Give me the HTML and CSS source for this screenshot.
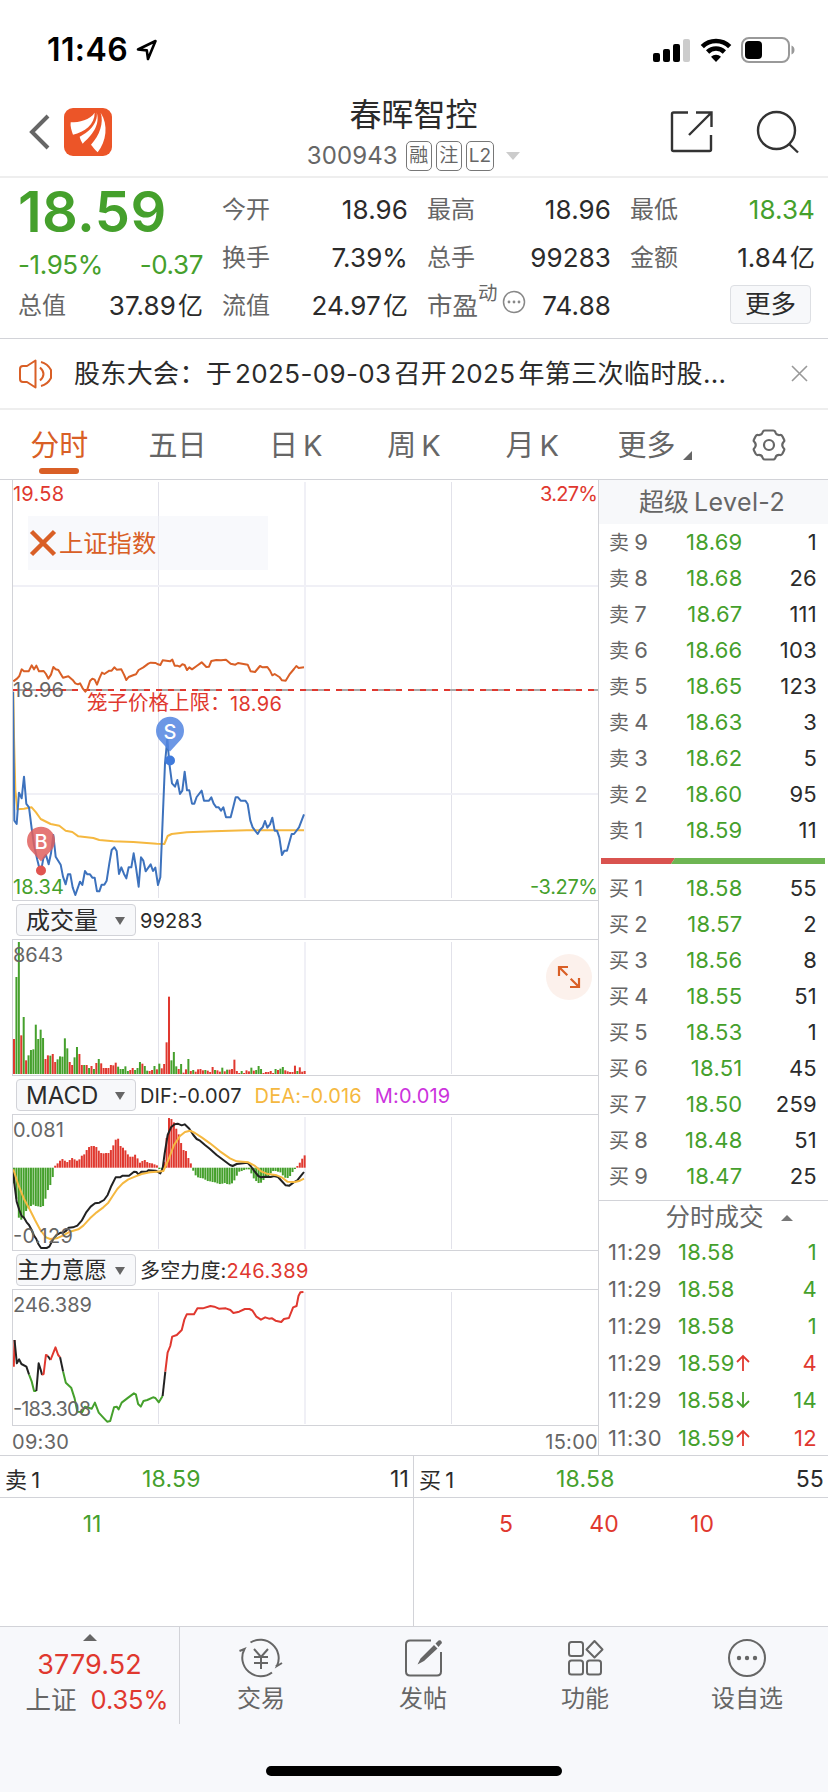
FILE: index.html
```html
<!DOCTYPE html>
<html lang="zh-CN">
    <head>
        <meta charset="UTF-8" />
        <meta name="viewport" content="width=device-width, initial-scale=1.0" />
        <link rel="stylesheet" href="styles.css">
        <title>春晖智控 300943</title>
    </head>
    <body>
        <div class="status-bar">
            <div class="clock">
                <span>11:46</span>
                <svg width="22" height="22" viewBox="0 0 22 22"><path d="M2 10.5 19.5 2 12 20 10.8 11.4Z" fill="none" stroke="#000" stroke-width="2.6" stroke-linejoin="round" /></svg>
            </div>
            <div class="status-icons">
                <svg width="38" height="24" viewBox="0 0 38 24">
                    <rect x="0" y="15" width="7" height="9" rx="2" /><rect x="10" y="11" width="7" height="13" rx="2" />
                    <rect x="20" y="6" width="7" height="18" rx="2" /><rect x="30" y="1" width="7" height="23" rx="2" fill="#ccc" />
                </svg>
                <svg width="32" height="24" viewBox="0 0 32 24">
                    <path d="M2.3 8.6a19.5 19.5 0 0 1 27.4 0M7.6 14a12 12 0 0 1 16.8 0" fill="none" stroke="#000" stroke-width="4.6" />
                    <path d="M16 24l-5-5.2a7 7 0 0 1 10 0z" />
                </svg>
                <svg width="54" height="26" viewBox="0 0 54 26">
                    <rect x="1" y="1" width="47" height="24" rx="7" fill="none" stroke="#999" stroke-width="2" />
                    <rect x="4" y="4" width="17" height="18" rx="4" />
                    <path d="M50.5 8.5c4 1.500 4 7.500 0 9z" fill="#999" />
                </svg>
            </div>
        </div>

        <header class="nav">
            <div class="nav-left">
                <svg width="24" height="40" viewBox="0 0 24 40"><path d="M21 4 5 20 21 36" fill="none" stroke="#666" stroke-width="4" /></svg>
                <svg class="logo" width="48" height="48" viewBox="0 0 144 144">
                    <rect width="144" height="144" rx="27" fill="#ec5528" />
                    <g fill="#fff">
                        <path d="M92 14C78 36 46 43 20 43c-2 12 3 26 7 37C62 71 92 50 92 14z" />
                        <path d="M98 13C104 47 70 76 47 86c2 8 5 14 9 21C82 84 110 52 98 13z" />
                        <path d="M110 14c10 30-3 68-29 96 7 8 12 16 20 23 26-34 33-82 9-119z" />
                    </g>
                </svg>
            </div>
            <div class="nav-title">
                <h1>春晖智控</h1>
                <p><span class="code">300943</span><i>融</i><i>注</i><i>L2</i><b class="tri-down"></b></p>
            </div>
            <div class="nav-right">
                <svg width="44" height="44" viewBox="0 0 44 44"><path d="M18 2.500H3.500Q2 2.500 2 4v35.500Q2 41 3.500 41h36q1.500 0 1.500-1.500V25M26 2.500h15.500V17M41 3 19 25" fill="none" stroke="#333" stroke-width="2.400" /></svg>
                <svg width="44" height="44" viewBox="0 0 44 44"><g fill="none" stroke="#333" stroke-width="2.400"><circle cx="20.500" cy="20.500" r="18.500" /><path d="M33 34l9 8.500" /></g></svg>
            </div>
        </header>

        <section class="quote">
            <div class="quote-main">
                <div class="price">18.59</div>
                <div class="change"><span>-1.95%</span><span>-0.37</span></div>
                <div class="cell"><label>总值</label><span>37.89<em>亿</em></span></div>
            </div>
            <div class="quote-grid">
                <div class="cell"><label>今开</label><span>18.96</span></div>
                <div class="cell"><label>最高</label><span>18.96</span></div>
                <div class="cell"><label>最低</label><span class="green">18.34</span></div>
                <div class="cell"><label>换手</label><span>7.39%</span></div>
                <div class="cell"><label>总手</label><span>99283</span></div>
                <div class="cell"><label>金额</label><span>1.84<em>亿</em></span></div>
                <div class="cell"><label>流值</label><span>24.97<em>亿</em></span></div>
                <div class="cell">
                    <label class="pe">市盈<sup>动</sup><svg width="24" height="24" viewBox="0 0 24 24"><circle cx="12" cy="12" r="10.500" fill="none" stroke="#888" stroke-width="1.500" /><g fill="#888"><circle cx="7" cy="12" r="1.400" /><circle cx="12" cy="12" r="1.400" /><circle cx="17" cy="12" r="1.400" /></g></svg></label>
                    <span>74.88</span>
                </div>
                <div class="cell more"><button>更多</button></div>
            </div>
        </section>

        <section class="notice">
            <svg width="36" height="32" viewBox="0 0 36 32"><g fill="none" stroke="#d95f26" stroke-width="2"><path d="M16.500 2.500v27L8 24H4q-3 0-3-3V11q0-3 3-3h4zM21 9.500q7 6.500 0 13M22 4q6.500 1.500 10 8v8q-3.500 6.500-10 8" stroke-linejoin="round" /></g></svg>
            <p>股东大会：于<span>2025-09-03</span>召开<span>2025</span>年第三次临时股...</p>
            <svg class="close" width="17" height="17" viewBox="0 0 17 17"><path d="M1 1l15 15M16 1 1 16" stroke="#999" stroke-width="1.600" /></svg>
        </section>

        <nav class="tabs">
            <a class="active">分时</a>
            <a>五日</a>
            <a>日<span>K</span></a>
            <a>周<span>K</span></a>
            <a>月<span>K</span></a>
            <a class="tab-more">更多<svg width="9" height="9" viewBox="0 0 9 9"><path d="M9 0v9H0z" fill="#666" /></svg></a>
            <a><svg width="34" height="32" viewBox="0 0 34 32"><g fill="none" stroke="#666" stroke-width="2.200" stroke-linejoin="round"><path d="M13 1.500h8q2 0 2.500 2 1 3 4.500 2.500 1.500-.3 2.500 1.500l1.500 3q.8 1.500-.5 2.500-2.500 3 0 6 1.300 1 .5 2.500l-1.500 3q-1 1.800-2.500 1.500-3.500-.5-4.500 2.500-.5 2-2.500 2h-8q-2 0-2.500-2-1-3-4.500-2.500-1.500.3-2.500-1.500L2 21.500q-.8-1.500.5-2.500 2.500-3 0-6Q1.200 12 2 10.500l1.500-3Q4.500 5.700 6 6q3.500.5 4.500-2.500.5-2 2.500-2z" /><circle cx="17" cy="16" r="5" /></g></svg></a>
        </nav>

        <main class="board">
            <section class="charts">
                <div class="panel">
                    <svg id="price-chart" width="585" height="420" viewBox="0 0 585 420">
                        <g class="grid">
                            <path d="M145.500 2v416M438.500 2v416" />
                            <path d="M292 2v416M0 106h585M0 314h585" class="wide" />
                        </g>
                        <rect x="15" y="36" width="240" height="54" fill="#f2f3f9" opacity=".5" />
                        <path d="M0 210h585" stroke="#aaa" stroke-width="2" stroke-dasharray="30 6" stroke-dashoffset="1" />
                        <path d="M0 210h585" stroke="#e0382f" stroke-width="2" stroke-dasharray="6 6" stroke-dashoffset="1" />
                        <text x="0" y="20.500" textLength="51" class="t red">19.58</text>
                        <text x="0" y="216.500" textLength="51" class="t">18.96</text>
                        <text x="0" y="413.500" textLength="51" class="t green">18.34</text>
                        <text x="527" y="20.500" textLength="58" class="t red">3.27%</text>
                        <text x="517" y="413.500" textLength="68" class="t green">-3.27%</text>
                        <path d="M18.500 51.500l23 23M41.500 51.500l-23 23" stroke="#d95f26" stroke-width="4.500" />
                        <text x="46" y="72" class="index-name">上证指数</text>
                        <text x="74" y="230" class="limit">笼子价格上限：</text>
                        <text x="217" y="230.500" textLength="52" class="t red">18.96</text>
                    </svg>
                </div>
                <div class="panel-head">
                    <button>成交量<b></b></button><span>99283</span>
                </div>
                <div class="panel">
                    <svg id="volume-chart" width="585" height="135" viewBox="0 0 585 135">
                        <g class="grid"><path d="M145.500 2v132M438.500 2v132" /><path d="M292 2v132" class="wide" /></g>
                    </svg>
                    <div class="expand"><svg width="24" height="24" viewBox="0 0 24 24"><path d="M11 2H2v9M2 2l8.300 8.300M13 22h9v-9M22 22l-8.300-8.300" fill="none" stroke="#d95f26" stroke-width="2.200" /></svg></div>
                </div>
                <div class="panel-head">
                    <button>MACD<b></b></button><span>DIF:-0.007</span><span class="yellow">DEA:-0.016</span><span class="purple">M:0.019</span>
                </div>
                <div class="panel">
                    <svg id="macd-chart" width="585" height="135" viewBox="0 0 585 135">
                        <g class="grid"><path d="M145.500 2v132M438.500 2v132" /><path d="M292 2v132" class="wide" /></g>
                    </svg>
                </div>
                <div class="panel-head">
                    <button class="narrow">主力意愿<b></b></button><span class="force">多空力度:<u>246.389</u></span>
                </div>
                <div class="panel">
                    <svg id="force-chart" width="585" height="135" viewBox="0 0 585 135">
                        <g class="grid"><path d="M145.500 2v132M438.500 2v132" /><path d="M292 2v132" class="wide" /></g>
                    </svg>
                </div>
                <div class="axis"><span>09:30</span><span>15:00</span></div>
            </section>

            <aside class="book">
                <h2>超级<span>Level-2</span></h2>
                <div class="levels" id="sells"></div>
                <div class="ratio"><svg width="224" height="6" viewBox="0 0 224 6"><path d="M0 0h74l-4 6H0z" fill="#d9534f" /><path d="M74 0h150v6H70z" fill="#6eb553" /></svg></div>
                <div class="levels" id="buys"></div>
                <h3>分时成交<b></b></h3>
                <div id="ticks"></div>
            </aside>
        </main>

        <section class="queue">
            <div>
                <div class="queue-head"><label>卖<span>1</span></label><span class="green">18.59</span><span>11</span></div>
                <div class="queue-list green"><span>11</span></div>
            </div>
            <div>
                <div class="queue-head"><label>买<span>1</span></label><span class="green">18.58</span><span>55</span></div>
                <div class="queue-list red"><span>5</span><span>40</span><span>10</span></div>
            </div>
        </section>

        <footer class="toolbar">
            <div class="toolbar-row">
                <div class="index">
                    <b></b>
                    <strong>3779.52</strong>
                    <p>上证<span>0.35%</span></p>
                </div>
                <a>
                    <svg width="44" height="40" viewBox="0 0 44 40"><g fill="none" stroke="#666" stroke-width="2"><path d="M11.500 4.500A18.500 18.500 0 0 1 38 28l5-3M38 28l-1-1M33 34.500A18.500 18.500 0 0 1 5.500 11l-5 2M15 11l7 8 7-8M22 19v12M15 19h14M15 25h14" /></g></svg>
                    交易
                </a>
                <a>
                    <svg width="38" height="40" viewBox="0 0 38 40"><path d="M27 2.500H6Q2 2.500 2 6.500v27q0 4 4 4h27q4 0 4-4V14" fill="none" stroke="#666" stroke-width="2" /><path d="M13.500 26.500l3-6L30 7l3.500 3.500L20 23zM31.500 5.500l3-3q2-1 3 1t-.5 2.500L34.500 9z" fill="#666" /></svg>
                    发帖
                </a>
                <a>
                    <svg width="38" height="40" viewBox="0 0 38 40"><g fill="none" stroke="#666" stroke-width="2"><rect x="3" y="4" width="14" height="14" rx="2.500" /><rect x="3" y="22.500" width="14" height="14" rx="2.500" /><rect x="21" y="22.500" width="14" height="14" rx="2.500" /><path d="M28.500 3l8 8.500-8 8-8-8z" stroke-linejoin="round" /></g></svg>
                    功能
                </a>
                <a>
                    <svg width="40" height="40" viewBox="0 0 40 40"><circle cx="20" cy="20" r="18" fill="none" stroke="#666" stroke-width="2" /><g fill="#666"><circle cx="12" cy="20" r="2.200" /><circle cx="20" cy="20" r="2.200" /><circle cx="28" cy="20" r="2.200" /></g></svg>
                    设自选
                </a>
            </div>
            <div class="home-bar"></div>
        </footer>
        <script src="charts.js"></script>
    </body>
</html>
```

FILE: styles.css
```css
* {
    margin: 0;
    padding: 0;
    box-sizing: border-box;
}
:root {
    --green: #45a02c;
    --red: #e0382f;
    --orange: #d95f26;
    --yellow: #f5b840;
    --text: #2b2b2b;
    --gray: #666;
    --line: #d2d3d8;
    --panel: #f7f8fa;
}
body {
    width: 828px;
    height: 1792px;
    background-color: #fff;
    color: var(--text);
    font-family: Inter, 'Noto Sans CJK SC', sans-serif;
    font-size: 22px;
    line-height: 1;
    overflow: hidden;
}
svg {
    display: block;
    flex: none;
}
button {
    font: inherit;
    color: inherit;
}
em,
i,
u {
    font-style: normal;
    text-decoration: none;
}
.green {
    color: var(--green);
    fill: var(--green) !important;
}
.red {
    color: var(--red);
    fill: var(--red) !important;
}
.yellow {
    color: var(--yellow);
}
.purple {
    color: #cc33dd;
}

/* ======= status bar ======= */
.status-bar {
    height: 88px;
    padding: 12px 33px 0 47px;
    display: flex;
    justify-content: space-between;
    align-items: center;
    color: #000;
}
.clock {
    display: flex;
    align-items: center;
    gap: 8px;
    font-size: 32px;
    font-weight: 600;
    letter-spacing: 0.4px;
}
.status-icons {
    display: flex;
    align-items: center;
    gap: 9px;
}

/* ======= nav ======= */
.nav {
    height: 90px;
    border-bottom: 2px solid #eee;
    padding: 0 28px 0 27px;
    display: grid;
    grid-template-columns: 1fr auto 1fr;
    align-items: center;
}
.nav-left,
.nav-right {
    display: flex;
    align-items: center;
    gap: 13px;
}
.nav-right {
    justify-content: flex-end;
    gap: 42px;
}
.nav-title {
    text-align: center;
    padding-top: 4px;
}
.nav-title h1 {
    font-size: 32px;
    font-weight: 400;
    line-height: 44px;
}
.nav-title p {
    display: flex;
    align-items: center;
    height: 38px;
    color: var(--gray);
}
.code {
    font-size: 24px;
    letter-spacing: 0.1px;
    margin-right: 8px;
}
.nav-title i {
    height: 30px;
    min-width: 26px;
    margin-right: 4px;
    border: 1.5px solid #777;
    border-radius: 5px;
    font-size: 19px;
    line-height: 27px;
    padding: 0 2px;
}
.tri-down {
    margin-left: 8px;
    border: 7px solid transparent;
    border-top: 8px solid #ccc;
    border-bottom: 0;
}

/* ======= quote ======= */
.quote {
    height: 161px;
    border-bottom: 1px solid var(--line);
    padding: 0 13px 0 18px;
    display: flex;
    gap: 19px;
}
.quote-main {
    width: 185px;
    color: var(--green);
}
.price {
    font-size: 56px;
    font-weight: 600;
    line-height: 69px;
    letter-spacing: 0.4px;
    white-space: nowrap;
}
.change {
    height: 35px;
    display: flex;
    justify-content: space-between;
    align-items: center;
    font-size: 26px;
    letter-spacing: -0.4px;
}
.quote-grid {
    flex: 1;
    display: grid;
    grid-template-columns: 186px 184px 185px;
    grid-template-rows: repeat(3, 48px);
    column-gap: 19px;
    padding-top: 8px;
}
.cell {
    display: flex;
    justify-content: space-between;
    align-items: center;
    height: 48px;
    font-size: 26px;
    letter-spacing: 0.1px;
    color: var(--text);
}
.quote-grid .cell {
    height: auto;
}
.cell label {
    font-size: 24px;
    letter-spacing: 0;
    color: var(--gray);
}
.cell em {
    margin-left: 2px;
    font-size: 25px;
}
.cell .pe {
    display: flex;
    align-items: center;
    font-size: 25.5px;
}
.pe sup {
    font-size: 19.5px;
    align-self: flex-start;
    margin-top: -9px;
}
.pe svg {
    margin: -9px 0 0 4px;
}
.cell.more {
    justify-content: flex-end;
    padding: 0 4px 4px 0;
}
.more button {
    width: 81px;
    height: 39px;
    border: 1px solid #dddfe3;
    border-radius: 4px;
    background-color: var(--panel);
    font-size: 25.5px;
}

/* ======= notice ======= */
.notice {
    height: 71px;
    border-bottom: 2px solid #eee;
    padding: 0 20px 0 19px;
    display: flex;
    align-items: center;
    font-size: 26px;
    white-space: nowrap;
}
.notice p {
    margin-left: 19px;
    letter-spacing: 0.35px;
}
.notice span {
    margin: 0 3px;
}
.close {
    margin-left: auto;
}

/* ======= tabs ======= */
.tabs {
    height: 69px;
    display: flex;
}
.tabs a {
    flex: 1;
    display: flex;
    justify-content: center;
    align-items: center;
    position: relative;
    padding-top: 1px;
    font-size: 29px;
    color: var(--gray);
}
.tabs span {
    margin-left: 5px;
}
.tabs .active {
    color: var(--orange);
}
.tabs .active::after {
    content: '';
    position: absolute;
    bottom: 5px;
    width: 40px;
    height: 6px;
    border-radius: 3px;
    background-color: var(--orange);
}
.tab-more svg {
    margin: 20px -8px 0 7px;
}

/* ======= charts ======= */
.board {
    display: flex;
    height: 976px;
    border-top: 1px solid var(--line);
}
.charts {
    width: 599px;
    margin-top: -1px;
    padding-left: 12px;
    border-right: 1px solid var(--line);
}
.panel {
    position: relative;
    border: 1px solid var(--line);
    border-right: 0;
}
.grid path {
    stroke: #e2e2ea;
    stroke-width: 1;
}
.grid .wide {
    stroke: #f0f0f6;
    stroke-width: 2;
}
.t {
    font-size: 20px;
    fill: var(--gray);
}
.index-name {
    font-size: 24.3px;
    fill: var(--orange);
}
.limit {
    font-size: 20.5px;
    fill: var(--red);
}
.curve {
    fill: none;
    stroke-width: 2;
    stroke-linejoin: round;
    vector-effect: non-scaling-stroke;
}
.pin {
    font-size: 20px;
    font-weight: 500;
    fill: #fff;
    text-anchor: middle;
}
.panel-head {
    height: 38px;
    padding-left: 4px;
    display: flex;
    align-items: center;
    font-size: 20px;
    letter-spacing: 0.15px;
}
.panel-head button {
    width: 120px;
    height: 32px;
    margin-right: 4px;
    padding: 1px 10px 0 9px;
    border: 1px solid var(--line);
    border-radius: 4px;
    background-color: var(--panel);
    display: flex;
    justify-content: space-between;
    align-items: center;
    font-size: 24px;
    letter-spacing: 0;
}
.panel-head .narrow {
    padding-left: 0;
    font-size: 22.5px;
}
.panel-head b {
    border: 5px solid transparent;
    border-top: 8px solid var(--gray);
    border-bottom: 0;
}
.panel-head span {
    margin-right: 13px;
    padding-top: 2px;
}
.panel-head u {
    color: var(--red);
    letter-spacing: 0.5px;
}
.expand {
    position: absolute;
    top: 14px;
    right: 6px;
    width: 46px;
    height: 46px;
    border-radius: 50%;
    background-color: #fcf1ec;
    display: flex;
    justify-content: center;
    align-items: center;
}
.axis {
    height: 29px;
    display: flex;
    justify-content: space-between;
    align-items: center;
    font-size: 20px;
    letter-spacing: 0.3px;
    color: var(--gray);
    padding-top: 2px;
}

/* ======= order book ======= */
.book {
    flex: 1;
}
.book h2 {
    height: 44px;
    background-color: var(--panel);
    color: var(--gray);
    font-size: 25px;
    font-weight: 400;
    line-height: 45px;
    text-align: center;
    padding-right: 3px;
}
.book h2 span {
    margin-left: 5px;
    letter-spacing: 0.4px;
}
.levels div {
    height: 36px;
    display: grid;
    grid-template-columns: 50px 83.5px 1fr;
    align-items: center;
    padding: 0 11px 0 10px;
    text-align: right;
    letter-spacing: 0.25px;
}
.levels label {
    text-align: left;
    font-size: 20px;
    color: var(--gray);
}
.levels label span {
    font-size: 22px;
    margin-left: 5px;
}
.ratio {
    height: 22px;
    padding: 10px 0 0 2px;
}
.book h3 {
    height: 33px;
    margin-top: 6px;
    padding: 1px 0 0 31px;
    border-top: 1px solid var(--line);
    color: var(--gray);
    font-size: 24.5px;
    font-weight: 400;
    display: flex;
    align-items: center;
    justify-content: center;
}
.book h3 b {
    margin-left: 17px;
    border: 6px solid transparent;
    border-bottom-color: #777;
    border-top: 0;
}
#ticks div {
    height: 37.2px;
    display: grid;
    grid-template-columns: 70px 58px 20px 1fr;
    align-items: center;
    padding: 0 11px 0 9px;
    letter-spacing: 0.3px;
}
#ticks time {
    color: var(--gray);
    letter-spacing: 0.5px;
}
#ticks b {
    font-weight: 400;
    text-align: right;
}

/* ======= queue ======= */
.queue {
    height: 171px;
    display: flex;
    border-top: 1px solid var(--line);
    font-size: 23px;
}
.queue > div {
    width: 413px;
}
.queue > div + div {
    width: 415px;
    border-left: 1px solid var(--line);
}
.queue-head {
    height: 42px;
    padding: 6px 4px 0 5px;
    border-bottom: 1px solid var(--line);
    display: grid;
    grid-template-columns: 137px 1fr auto;
    align-items: center;
    letter-spacing: 0.2px;
}
.queue-head label {
    font-size: 22px;
}
.queue-head label span {
    margin-left: 4px;
}
.queue-list {
    display: grid;
    grid-template-columns: repeat(3, 98px);
    padding: 15px 0 0 43px;
    text-align: center;
}

/* ======= toolbar ======= */
.toolbar {
    height: 166px;
    border-top: 1px solid var(--line);
    background-color: #f7f8fb;
}
.toolbar-row {
    display: flex;
    height: 97px;
}
.index {
    width: 180px;
    border-right: 1px solid var(--line);
    display: flex;
    flex-direction: column;
    align-items: center;
    color: var(--red);
}
.index b {
    margin: 7px 0 10px;
    border: 7px solid transparent;
    border-bottom-color: var(--gray);
    border-top: 0;
}
.index strong {
    font-size: 27px;
    font-weight: 400;
    letter-spacing: 0.1px;
}
.index p {
    margin: 9px 0 0 15px;
    font-size: 25.5px;
    color: var(--gray);
}
.index span {
    margin-left: 14px;
    letter-spacing: -0.1px;
    color: var(--red);
}
.toolbar a {
    flex: 1;
    padding-top: 11px;
    display: flex;
    flex-direction: column;
    align-items: center;
    gap: 9px;
    font-size: 24px;
    color: var(--gray);
}
.home-bar {
    width: 296px;
    height: 10px;
    margin: 42px auto 0;
    border-radius: 5px;
    background-color: #000;
}
```

FILE: charts.js
```js
const GREEN = '#45a02c';
const RED = '#e0382f';
const BLACK = '#222';
const YELLOW = '#f5b840';

const priceChart = document.querySelector('#price-chart');
const volumeChart = document.querySelector('#volume-chart');
const macdChart = document.querySelector('#macd-chart');
const forceChart = document.querySelector('#force-chart');

const draw = (svg, markup) => svg.insertAdjacentHTML('beforeend', markup);
const curve = (color, points) => `<polyline class="curve" stroke="${color}" points="${points}" />`;

// Price, average and index
const indexLine = '40,634 52,625 58,618 65,598 72,604 86,604 95,586 102,598 109,587 117,604 131,603 138,612 145,626 153,614 160,591 167,598 175,600 189,623 205,619 218,630 226,640 234,643 240,640 248,655 256,665 262,658 270,633 277,626 284,629 291,644 298,625 306,608 313,612 328,602 335,602 343,592 350,599 364,598 372,614 379,630 386,621 401,615 408,613 416,600 430,592 445,581 452,578 467,579 474,583 481,585 488,571 510,574 517,569 524,587 532,587 539,590 547,583 554,585 561,600 568,592 576,598 590,588 605,577 619,591 627,590 634,573 649,570 663,571 678,569 692,581 706,584 714,579 743,584 752,604 765,606 780,588 788,592 802,591 810,602 817,616 824,612 838,621 846,631 857,632 868,614 882,597 889,588 896,594 912,592';
const averageLine = '40,665 42,800 46,960 52,1018 72,1016 95,1012 108,1027 122,1047 152,1062 178,1067 197,1082 217,1086 235,1099 280,1104 298,1110 340,1114 400,1116 470,1121 493,1122 503,1098 515,1092 560,1087 640,1084 740,1081 912,1081';
const priceLine = '39,665 41,850 43,1052 50,1062 57,968 65,985 72,920 79,1002 87,1012 95,1075 102,1125 112,1170 122,1210 130,1165 138,1155 146,1183 153,1150 160,1095 167,1160 182,1184 189,1220 197,1243 204,1213 211,1213 218,1252 226,1275 240,1235 247,1245 255,1203 262,1213 270,1213 277,1223 284,1223 291,1264 298,1264 305,1244 313,1244 320,1232 328,1180 335,1140 343,1132 350,1143 357,1212 364,1192 372,1212 379,1225 386,1192 394,1192 401,1150 408,1192 416,1250 423,1162 430,1172 437,1204 445,1193 452,1183 459,1203 466,1193 474,1245 481,1222 488,1050 495,880 502,805 508,880 516,940 525,950 532,930 540,972 547,962 554,905 561,961 568,961 576,1001 583,1001 590,981 605,962 612,992 627,992 634,982 641,1001 649,1012 656,1012 663,1022 670,1012 678,1042 692,1042 700,1010 707,982 714,982 722,992 736,992 743,1002 751,1052 758,1072 773,1092 780,1080 788,1072 795,1053 802,1073 810,1063 817,1043 824,1082 831,1082 838,1102 846,1155 853,1142 861,1142 875,1092 882,1092 897,1072 912,1033';

const pin = (x, y, color, dark, letter) => `
    <g opacity=".85"><path d="M${x - 11} ${y + 8}A14 14 0 1 1 ${x + 11} ${y + 8}L${x} ${y + 20}z" fill="${color}" /></g>
    <circle cx="${x}" cy="${y + 29}" r="5" fill="${dark}" />
    <text class="pin" x="${x}" y="${y + 7}">${letter}</text>`;

draw(priceChart, `
    <g transform="translate(-13 -10) scale(.33333)">
        ${curve('#d95f26', indexLine)}${curve(YELLOW, averageLine)}${curve('#3d72bd', priceLine)}
    </g>
    ${pin(28, 361.500, '#e0605e', '#e05450', 'B')}
    ${pin(157, 251.500, '#5285e0', '#3f7adb', 'S')}`);

// Volume bars, letter is the direction
const volume = 'r105 g291 g396 r116 g171 r41 g56 g72 g74 g148 g105 g133 g108 r45 r56 g55 r60 r36 g44 g53 g52 g107 g77 r36 r27 g50 g81 r60 r27 g27 r27 g18 r24 g15 r33 g45 r32 r18 r18 r18 r27 r26 r34 g22 g15 g15 g23 g9 r12 r18 g12 g18 g36 r31 g24 g10 r9 r12 g24 r14 g31 r17 r30 r95 r232 g41 g66 g23 r15 g30 r4 r14 g45 r9 g12 r7 r14 r15 r11 g12 r10 r6 r21 g12 r11 r7 g19 r8 g13 r13 r15 r43 r9 r3 g9 r3 r11 r8 g19 r10 g12 g24 g15 r3 r6 r6 r9 r3 g15 r12 g16 g21 r11 r8 r6 r6 r25 g9 r20 r7 r9';
const STEP = 2.422;

draw(volumeChart, volume.split(' ').map((e, ind) => {
    const height = e.slice(1) / 3;
    return `<rect x="${ind * STEP}" y="${134 - height}" width="2" height="${height}" fill="${e[0] == 'r' ? RED : GREEN}" />`;
}).join('') + '<text x="0" y="22" textLength="50" class="t">8643</text>');

// MACD
const macd = [-47, -93, -150, -156, -152, -130, -122, -115, -111, -115, -116, -118, -115, -93, -67, -52, -28, 6, 13, 21, 26, 21, 17, 23, 29, 25, 21, 25, 36, 40, 53, 62, 65, 65, 62, 51, 44, 43, 44, 44, 53, 67, 84, 87, 65, 60, 52, 40, 33, 33, 39, 28, 15, 20, 23, 17, 14, 13, 10, 7, -4, -4, 18, 89, 149, 146, 136, 117, 100, 74, 53, 50, 29, 13, -9, -23, -29, -31, -32, -36, -40, -41, -43, -44, -47, -49, -48, -46, -49, -50, -47, -38, -24, -12, -10, -7, -5, -5, -17, -32, -40, -46, -45, -37, -29, -25, -17, -10, -10, -12, -14, -23, -30, -31, -25, -13, -4, 5, 15, 27, 37];
const dif = '40,845 43,880 50,935 58,960 65,978 72,983 80,997 87,1005 95,1020 102,1037 109,1047 115,1062 123,1074 140,1074 148,1070 158,1050 170,1035 182,1028 190,1028 199,1022 206,1013 219,1012 232,1007 245,992 258,968 272,950 285,940 298,938 312,930 323,915 334,888 347,862 360,862 368,857 387,857 402,845 409,846 416,854 424,845 440,845 445,841 467,842 481,850 488,835 494,790 503,735 513,712 524,703 533,701 545,706 554,703 568,716 580,735 590,747 600,752 615,765 630,777 650,795 670,810 690,825 698,828 710,822 742,818 752,828 762,842 775,858 783,862 795,860 812,861 822,858 834,861 845,873 857,886 868,887 880,878 893,870 905,855 912,846';
const dea = '40,838 55,885 72,927 90,960 105,990 121,1020 138,1042 150,1047 170,1045 190,1036 210,1025 235,1018 250,1007 270,985 290,967 310,952 325,938 338,918 352,897 368,880 385,868 405,860 425,852 450,847 470,845 490,843 505,810 522,765 540,738 555,726 570,722 585,729 605,742 630,760 660,784 690,805 710,814 745,817 765,828 785,845 800,851 830,856 845,862 862,875 885,876 900,872 912,866';

draw(macdChart, macd.map((e, ind) => {
    const height = Math.abs(e) / 3;
    return `<rect x="${ind * STEP}" y="${e > 0 ? 52.700 - height : 52.700}" width="2" height="${height}" fill="${e > 0 ? RED : GREEN}" />`;
}).join('') + `
    <g transform="translate(-13 -225) scale(.33333)">${curve(BLACK, dif)}${curve(YELLOW, dea)}</g>
    <text x="0" y="22" textLength="51" class="t">0.081</text>
    <text x="0" y="128" textLength="60" class="t">-0.129</text>`);

// Main force curve changes colour by strength
const force = [
    [RED, '36,380 38,300'],
    [BLACK, '38,300 44,370 50,358 56,372 69,380 76,404'],
    [GREEN, '76,404 83,425 89,453 95,453'],
    [BLACK, '95,453 101,370 107,392 110,405'],
    [RED, '110,405 114,402 120,345 125,348'],
    [BLACK, '125,348 132,360'],
    [RED, '132,360 145,322 152,345 157,352'],
    [BLACK, '157,352 165,395'],
    [GREEN, '165,395 172,428 186,443 195,475 202,515 215,516 222,500 240,506 248,488 258,518 270,533 280,545 288,543 298,502 305,500 310,508 318,488 335,473 350,460 355,463 361,492 368,500 375,483 385,480 400,472 406,474 415,487 425,468'],
    [BLACK, '425,468 432,395'],
    [RED, '432,395 438,338 445,318 450,290 462,285 475,270 482,238 488,223 507,223 516,205 530,205 550,198 560,200 572,206 590,205 602,210 610,219 625,215 640,207 652,207 660,212 670,230 682,239 693,232 703,236 711,235 720,242 735,246 742,237 755,234 766,202 775,198 780,168 785,157 793,156'],
];

draw(forceChart, `
    <g transform="translate(-13 -50) scale(.38265 .33333)">${force.map(([color, points]) => curve(color, points)).join('')}</g>
    <text x="0" y="22" textLength="79" class="t">246.389</text>
    <text x="0" y="126" textLength="78" class="t">-183.308</text>`);

// Order book
const levelMaker = side => ([level, price, amount]) => `<div><label>${side}<span>${level}</span></label><span class="green">${price}</span><span>${amount}</span></div>`;
const sells = [[9, '18.69', 1], [8, '18.68', 26], [7, '18.67', 111], [6, '18.66', 103], [5, '18.65', 123], [4, '18.63', 3], [3, '18.62', 5], [2, '18.60', 95], [1, '18.59', 11]];
const buys = [[1, '18.58', 55], [2, '18.57', 2], [3, '18.56', 8], [4, '18.55', 51], [5, '18.53', 1], [6, '18.51', 45], [7, '18.50', 259], [8, '18.48', 51], [9, '18.47', 25]];
document.querySelector('#sells').innerHTML = sells.map(levelMaker('卖')).join('');
document.querySelector('#buys').innerHTML = buys.map(levelMaker('买')).join('');

// Latest trades
const arrows = {
    up: '<svg width="14" height="18" viewBox="0 0 14 18"><path d="M7 17V2M1 8l6-6 6 6" fill="none" stroke="#e0382f" stroke-width="1.800" /></svg>',
    down: '<svg width="14" height="18" viewBox="0 0 14 18"><path d="M7 1v15M1 10l6 6 6-6" fill="none" stroke="#45a02c" stroke-width="1.800" /></svg>',
    none: '<i></i>',
};
const ticks = [['11:29', '18.58', 'none', 1, 'green'], ['11:29', '18.58', 'none', 4, 'green'], ['11:29', '18.58', 'none', 1, 'green'], ['11:29', '18.59', 'up', 4, 'red'], ['11:29', '18.58', 'down', 14, 'green'], ['11:30', '18.59', 'up', 12, 'red']];
document.querySelector('#ticks').innerHTML = ticks
    .map(([time, price, arrow, amount, color]) => `<div><time>${time}</time><span class="green">${price}</span>${arrows[arrow]}<b class="${color}">${amount}</b></div>`)
    .join('');
```
